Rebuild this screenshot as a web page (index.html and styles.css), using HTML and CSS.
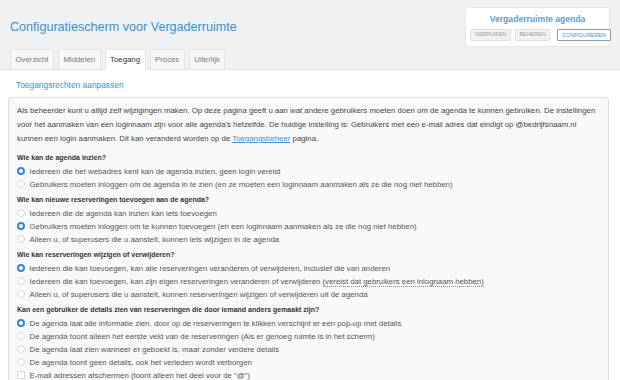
FILE: index.html
```html
<!DOCTYPE html>
<html lang="nl">
<head>
    <meta charset="UTF-8">
    <meta name="viewport" content="width=device-width, initial-scale=1.0">
    <title>Configuratiescherm voor Vergaderruimte</title>
    <link rel="stylesheet" href="styles.css">
</head>
<body>
    <header class="top">
        <div class="top-row">
            <h1 class="page-title">Configuratiescherm voor Vergaderruimte</h1>
            <div class="app-box">
                <div class="app-title">Vergaderruimte agenda</div>
                <div class="app-buttons">
                    <span class="app-btn">GEBRUIKEN</span>
                    <span class="app-btn">BEHEREN</span>
                    <span class="app-btn current">CONFIGUREREN</span>
                </div>
            </div>
        </div>
        <nav class="tabs">
            <span class="tab">Overzicht</span>
            <span class="tab">Middelen</span>
            <span class="tab active">Toegang</span>
            <span class="tab">Proces</span>
            <span class="tab">Uiterlijk</span>
        </nav>
    </header>

    <main class="content">
        <h2 class="section-title">Toegangsrechten aanpassen</h2>
        <div class="panel">
            <p class="intro">
                Als beheerder kunt u altijd zelf wijzigingen maken. Op deze pagina geeft u aan wat andere gebruikers moeten doen om de agenda te kunnen gebruiken. De instellingen<br>
                voor het aanmaken van een loginnaam zijn voor alle agenda's hetzelfde. De huidige instelling is: Gebruikers met een e-mail adres dat eindigt op @bedrijfsnaam.nl<br>
                kunnen een login aanmaken. Dit kan veranderd worden op de <a href="#" class="link">Toegangsbeheer</a> pagina.
            </p>

            <div class="group">
                <h3>Wie kan de agenda inzien?</h3>
                <label class="option"><span class="radio on"></span><span>Iedereen die het webadres kent kan de agenda inzien, geen login vereist</span></label>
                <label class="option"><span class="radio"></span><span>Gebruikers moeten inloggen om de agenda in te zien (en ze moeten een loginnaam aanmaken als ze die nog niet hebben)</span></label>
            </div>

            <div class="group">
                <h3>Wie kan nieuwe reserveringen toevoegen aan de agenda?</h3>
                <label class="option"><span class="radio"></span><span>Iedereen die de agenda kan inzien kan iets toevoegen</span></label>
                <label class="option"><span class="radio on"></span><span>Gebruikers moeten inloggen om te kunnen toevoegen (en een loginnaam aanmaken als ze die nog niet hebben)</span></label>
                <label class="option"><span class="radio"></span><span>Alleen u, of superusers die u aanstelt, kunnen iets wijzigen in de agenda</span></label>
            </div>

            <div class="group">
                <h3>Wie kan reserveringen wijzigen of verwijderen?</h3>
                <label class="option"><span class="radio on"></span><span>Iedereen die kan toevoegen, kan alle reserveringen veranderen of verwijderen, inclusief die van anderen</span></label>
                <label class="option"><span class="radio"></span><span>Iedereen die kan toevoegen, kan zijn eigen reserveringen veranderen of verwijderen <span class="hint">(vereist dat gebruikers een inlognaam hebben)</span></span></label>
                <label class="option"><span class="radio"></span><span>Alleen u, of superusers die u aanstelt, kunnen reserveringen wijzigen of verwijderen uit de agenda</span></label>
            </div>

            <div class="group">
                <h3>Kan een gebruiker de details zien van reserveringen die door iemand anders gemaakt zijn?</h3>
                <label class="option"><span class="radio on"></span><span>De agenda laat alle informatie zien, door op de reserveringen te klikken verschijnt er een pop-up met details</span></label>
                <label class="option"><span class="radio"></span><span>De agenda toont alleen het eerste veld van de reserveringen (Als er genoeg ruimte is in het scherm)</span></label>
                <label class="option"><span class="radio"></span><span>De agenda laat zien wanneer er geboekt is, maar zonder verdere details</span></label>
                <label class="option"><span class="radio"></span><span>De agenda toont geen details, ook het verleden wordt verborgen</span></label>
                <label class="option"><span class="check"></span><span>E-mail adressen afschermen (toont alleen het deel voor de “@”)</span></label>
            </div>
        </div>
    </main>
</body>
</html>
```

FILE: styles.css
```css
body {
    margin: 0;
    font-family: "Liberation Sans", Arial, sans-serif;
    background-color: #fff;
    color: #444;
}

/* kop met titel en tabs */
.top {
    background-color: #eff1f3;
    padding: 7px 10px 0 10px;
    border-bottom: 1px solid #e2e4e6;
}
.top-row {
    display: flex;
    justify-content: space-between;
    align-items: center;
    height: 40px;
}
.page-title {
    margin: 0;
    font-size: 12.6px;
    font-weight: normal;
    color: #3d8fd3;
}
.app-box {
    width: 143px;
    height: 38px;
    background-color: #fff;
    border: 1px solid #e4e6e8;
    border-radius: 3px;
    display: flex;
    flex-direction: column;
    align-items: center;
    justify-content: center;
    gap: 5px;
}
.app-title {
    font-size: 8.6px;
    font-weight: bold;
    color: #5a9fdb;
}
.app-buttons {
    display: flex;
    gap: 4px;
    margin-left: 6px;
}
.app-btn {
    font-size: 5.4px;
    line-height: 9px;
    padding: 0 3.5px;
    color: #9a9a9a;
    background-color: #f1f1f1;
    border: 1px solid #e0e0e0;
    border-radius: 1px;
}
.app-btn.current {
    margin-left: 3px;
    color: #3d8fd3;
    background-color: #fff;
    border-color: #8c9aab;
    line-height: 10px;
    padding: 0 4px;
}

.tabs {
    display: flex;
    gap: 4px;
    margin-top: 2px;
    margin-bottom: -1px;
}
.tab {
    font-size: 7.8px;
    line-height: 19px;
    padding: 0 4.5px;
    color: #777;
    background-color: #f6f7f8;
    border: 1px solid #e2e3e5;
    border-bottom-color: #e2e4e6;
    border-radius: 2px 2px 0 0;
}
.tab.active {
    color: #333;
    background-color: #fff;
    border-bottom-color: #fff;
}

/* inhoud */
.content {
    padding: 0 11px 0 8px;
}
.section-title {
    margin: 9px 0 6px 8px;
    font-size: 8.4px;
    line-height: 12px;
    font-weight: normal;
    color: #3d8fd3;
}
.panel {
    background-color: #f8f9fa;
    border: 1px solid #dcdfe2;
    border-radius: 3px;
    padding: 6px 8px 6px 8px;
}
.intro {
    margin: 0 0 4.5px 0;
    font-size: 7.8px;
    line-height: 14px;
    color: #444;
}
.link {
    color: #3d8fd3;
}
.group {
    margin-bottom: 2px;
}
.group h3 {
    margin: 0 0 1px 0;
    font-size: 7px;
    line-height: 13px;
    color: #333;
}
.option {
    display: flex;
    align-items: center;
    gap: 4.5px;
    font-size: 7.8px;
    line-height: 13px;
    color: #555;
}
.radio {
    width: 6px;
    height: 6px;
    border: 1px solid #d6d8da;
    border-radius: 50%;
    background-color: #fff;
    flex-shrink: 0;
}
.radio.on {
    width: 4px;
    height: 4px;
    border: 2px solid #3a85d2;
    background-color: #fff;
}
.check {
    width: 6px;
    height: 6px;
    border: 1px solid #d6d8da;
    border-radius: 1px;
    background-color: #fff;
    flex-shrink: 0;
}
.hint {
    border-bottom: 1px dotted #888;
}
```
